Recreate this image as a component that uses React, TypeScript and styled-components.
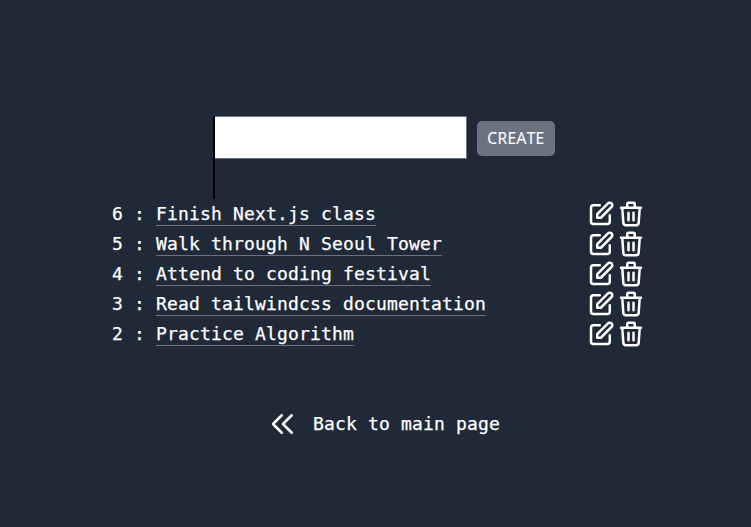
import React from "react";
import styled, { createGlobalStyle } from "styled-components";

const GlobalStyle = createGlobalStyle`
  *, *::before, *::after { box-sizing: border-box; }
  body { margin: 0; background: #1f2937; }
`;

const Page = styled.main`
  display: flex;
  flex-direction: column;
  height: 527px;
  padding-top: 116px;
  background: #1f2937;
  color: #fff;
  font-family: Consolas, "DejaVu Sans Mono", monospace;
  font-size: 18px;
  letter-spacing: 0.163px;
  line-height: 30px;
  -webkit-text-stroke: 0.25px #fff;
`;

const Form = styled.form`
  display: flex;
  align-items: flex-start;
  gap: 10px;
  height: 83px;
  margin-left: 213px;
`;

const Field = styled.div`
  height: 83px;
  border-left: 2px solid #000;
`;

const TitleInput = styled.input`
  display: block;
  width: 252px;
  height: 43px;
  padding: 0 10px;
  border: 1px solid #6b7280;
  border-left: 0;
  border-radius: 0;
  outline: none;
  background: #fff;
  color: #1f2937;
  font: inherit;
`;

const CreateButton = styled.button`
  width: 78px;
  height: 35px;
  margin-top: 5px;
  padding: 0;
  border: 0;
  border-radius: 5px;
  background: #6b7280;
  color: #fff;
  font-family: "Segoe UI", "Open Sans", sans-serif;
  font-size: 15.5px;
  letter-spacing: 0.4px;
  line-height: 35px;
  -webkit-text-stroke: 0.2px #fff;
`;

const List = styled.ul`
  width: 534px;
  margin: 0 0 0 112px;
  padding: 0;
  list-style: none;
`;

const Row = styled.li`
  display: flex;
  align-items: flex-start;
  height: 30px;
`;

const Index = styled.span`
  width: 44px;
  white-space: pre;
`;

const Title = styled.span`
  height: 27px;
  border-bottom: 1px solid #6b7280;
`;

const Actions = styled.div`
  display: flex;
  margin-left: auto;
`;

const BackLink = styled.a`
  display: flex;
  align-items: center;
  gap: 15px;
  height: 30px;
  margin: 60px 0 0 268px;
  color: #fff;
  text-decoration: none;
`;

const Svg = styled.svg`
  display: block;
  flex: none;
  width: 30px;
  height: 30px;
  fill: none;
  stroke: currentColor;
  stroke-width: 2;
  stroke-linecap: round;
  stroke-linejoin: round;
`;

const icons = {
  edit: "M11 5H6a2 2 0 00-2 2v11a2 2 0 002 2h11a2 2 0 002-2v-5m-1.414-9.414a2 2 0 112.828 2.828L11.828 15H9v-2.828l8.586-8.586z",
  trash:
    "M19 7l-.867 12.142A2 2 0 0116.138 21H7.862a2 2 0 01-1.995-1.858L5 7m5 4v6m4-6v6m1-10V4a1 1 0 00-1-1h-4a1 1 0 00-1 1v3M4 7h16",
  back: "M11 19l-7-7 7-7m8 14l-7-7 7-7",
};

function Icon({ name }: { name: keyof typeof icons }) {
  return (
    <Svg viewBox="0 0 24 24" aria-hidden="true">
      <path d={icons[name]} />
    </Svg>
  );
}

const todos = [
  { id: 6, title: "Finish Next.js class" },
  { id: 5, title: "Walk through N Seoul Tower" },
  { id: 4, title: "Attend to coding festival" },
  { id: 3, title: "Read tailwindcss documentation" },
  { id: 2, title: "Practice Algorithm" },
];

export default function App() {
  return (
    <>
      <GlobalStyle />
      <Page>
        <Form>
          <Field>
            <TitleInput type="text" />
          </Field>
          <CreateButton type="button">CREATE</CreateButton>
        </Form>
        <List>
          {todos.map((todo) => (
            <Row key={todo.id}>
              <Index>{todo.id} : </Index>
              <Title>{todo.title}</Title>
              <Actions>
                <Icon name="edit" />
                <Icon name="trash" />
              </Actions>
            </Row>
          ))}
        </List>
        <BackLink href="#">
          <Icon name="back" />
          <span>Back to main page</span>
        </BackLink>
      </Page>
    </>
  );
}
